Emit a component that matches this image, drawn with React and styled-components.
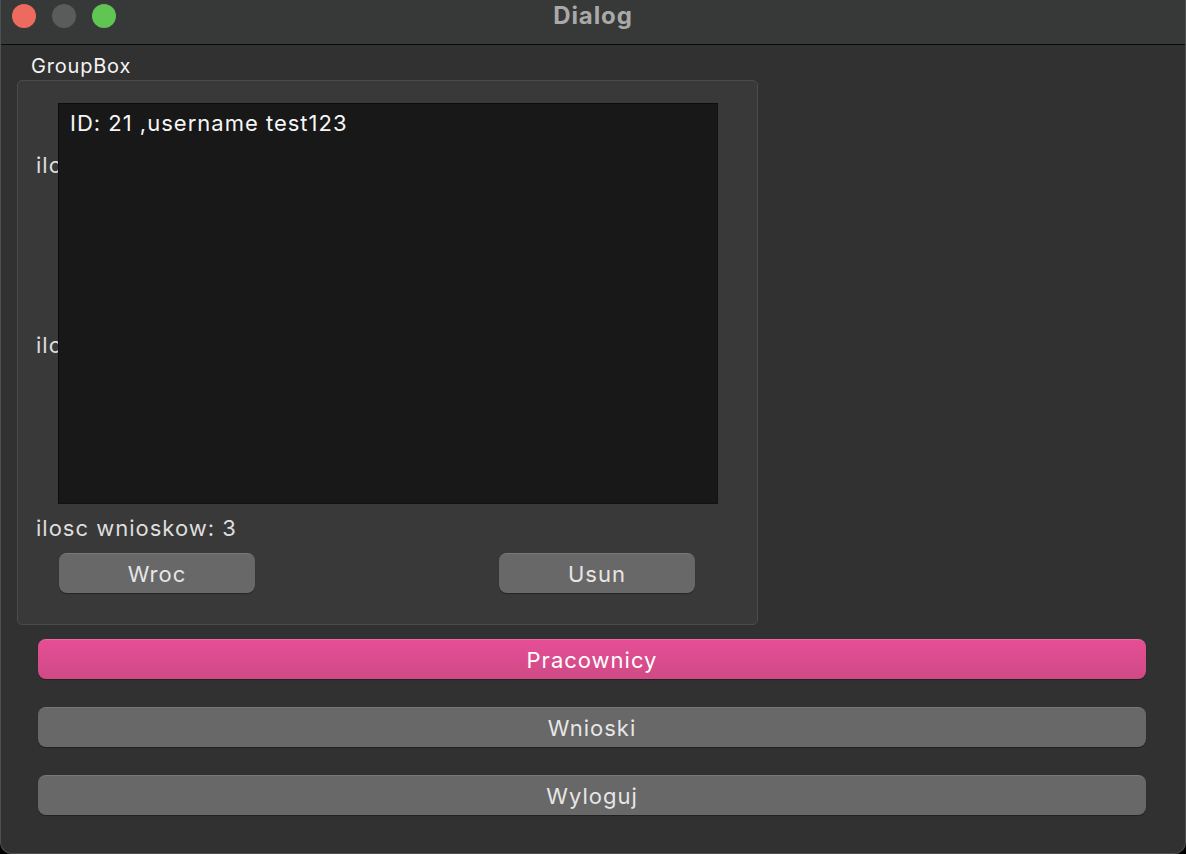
import React from 'react'
import styled, { createGlobalStyle } from 'styled-components'

const GlobalStyle = createGlobalStyle`
  html, body {
    margin: 0;
    padding: 0;
    background: #000;
  }
  * {
    box-sizing: border-box;
  }
`

const Window = styled.div`
  width: 1186px;
  height: 854px;
  display: flex;
  flex-direction: column;
  background: #313131;
  border-radius: 0 0 12px 12px;
  border: 1px solid #4f4f4f;
  border-top: none;
  overflow: hidden;
  font-family: Inter, "Liberation Sans", sans-serif;
  letter-spacing: 1px;
`

const TitleBar = styled.div`
  height: 45px;
  flex-shrink: 0;
  position: relative;
  display: flex;
  align-items: center;
  justify-content: center;
  background: #373838;
  border-bottom: 1px solid #0a0a0a;
`

const Lights = styled.div`
  position: absolute;
  left: 11px;
  top: 4px;
  display: flex;
  gap: 16px;
`

const Light = styled.span`
  width: 24px;
  height: 24px;
  border-radius: 50%;
  background: ${p => p.color};
`

const Title = styled.div`
  font-size: 24px;
  font-weight: 700;
  letter-spacing: 0.9px;
  color: #a9a9a9;
  margin-top: -14px;
`

const Body = styled.div`
  flex: 1;
  padding: 7px 0 0 16px;
  display: flex;
  flex-direction: column;
`

const GroupLabel = styled.div`
  font-size: 20px;
  letter-spacing: 0.8px;
  color: #f4f4f4;
  padding-left: 14px;
  height: 28px;
  line-height: 28px;
`

const Frame = styled.div`
  width: 741px;
  height: 545px;
  background: #393939;
  border: 1px solid #4b4b4b;
  border-radius: 5px;
  padding: 22px 0 0 18px;
  display: flex;
  flex-direction: column;
`

const ListArea = styled.div`
  display: flex;
`

const Hidden = styled.div`
  width: 22px;
  height: 401px;
  overflow: hidden;
  display: flex;
  flex-direction: column;
  padding-top: 49px;
  gap: 154px;
`

const Label = styled.div`
  font-size: 22px;
  color: #dedede;
  white-space: nowrap;
  line-height: 26px;
`

const List = styled.div`
  width: 660px;
  height: 401px;
  background: #181818;
  border: 1px solid #121212;
  border-top-color: #0c0c0c;
  border-left-color: #0c0c0c;
  padding: 5px 11px;
`

const Item = styled.div`
  font-size: 22px;
  color: #f6f6f6;
  line-height: 28px;
`

const Count = styled(Label)`
  margin-top: 11px;
`

const Row = styled.div`
  display: flex;
  justify-content: space-between;
  width: 636px;
  margin: 12px 0 0 23px;
`

const Button = styled.button`
  height: 40px;
  width: ${p => p.width || '196px'};
  border: none;
  border-radius: 8px;
  background: ${p => p.primary
    ? 'linear-gradient(#e64e95, #cf4a86)'
    : '#686868'};
  border-top: 1px solid ${p => p.primary ? '#ee6aa6' : '#787878'};
  box-shadow: 0 1px 1px rgba(0, 0, 0, 0.35);
  color: ${p => p.primary ? '#ffffff' : '#e6e6e6'};
  font-family: Inter, "Liberation Sans", sans-serif;
  font-size: 22px;
  letter-spacing: 1px;
  padding: 0;
  cursor: pointer;
`

const Stack = styled.div`
  display: flex;
  flex-direction: column;
  gap: 28px;
  margin: 14px 0 0 21px;
`

const App = () => {
  return (
    <>
      <GlobalStyle />
      <Window>
        <TitleBar>
          <Lights>
            <Light color="#ec6a5e" />
            <Light color="#5b5b5b" />
            <Light color="#61c554" />
          </Lights>
          <Title>Dialog</Title>
        </TitleBar>
        <Body>
          <GroupLabel>GroupBox</GroupLabel>
          <Frame>
            <ListArea>
              <Hidden>
                <Label>ilosc pracownikow: 1</Label>
                <Label>ilosc kierownikow: 1</Label>
              </Hidden>
              <List>
                <Item>ID: 21 ,username test123</Item>
              </List>
            </ListArea>
            <Count>ilosc wnioskow: 3</Count>
            <Row>
              <Button>Wroc</Button>
              <Button>Usun</Button>
            </Row>
          </Frame>
          <Stack>
            <Button primary width="1108px">Pracownicy</Button>
            <Button width="1108px">Wnioski</Button>
            <Button width="1108px">Wyloguj</Button>
          </Stack>
        </Body>
      </Window>
    </>
  )
}

export default App
